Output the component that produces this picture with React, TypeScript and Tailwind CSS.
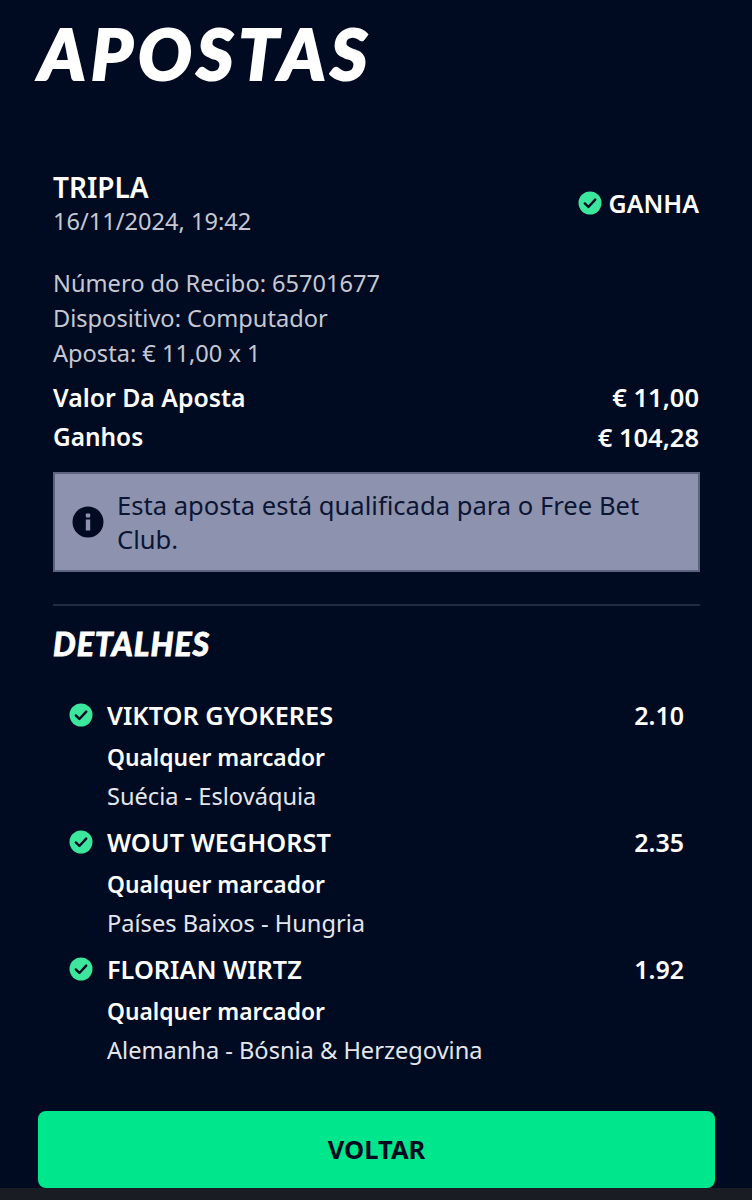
import React from 'react';

const bets = [
  { name: 'VIKTOR GYOKERES', odd: '2.10', match: 'Suécia - Eslováquia' },
  { name: 'WOUT WEGHORST', odd: '2.35', match: 'Países Baixos - Hungria' },
  { name: 'FLORIAN WIRTZ', odd: '1.92', match: 'Alemanha - Bósnia & Herzegovina' },
];

const CheckIcon = () => (
  <svg width="24" height="24" viewBox="0 0 24 24" className="shrink-0">
    <circle cx="12" cy="12" r="11.5" fill="#3ce69c" />
    <path d="M6.8 12.4l3.6 3.6 6.8-7.4" fill="none" stroke="#000b22" strokeWidth="2.4" strokeLinecap="round" strokeLinejoin="round" />
  </svg>
);

const InfoIcon = () => (
  <svg width="32" height="32" viewBox="0 0 32 32" className="shrink-0">
    <circle cx="16" cy="16" r="15.5" fill="#000b22" />
    <rect x="13.8" y="13.5" width="4.4" height="11" fill="#8d93ae" />
    <rect x="13.8" y="7.5" width="4.4" height="4" rx="1" fill="#8d93ae" />
  </svg>
);

const App: React.FC = () => {
  return (
    <div className="flex flex-col h-[1200px] w-[752px] overflow-hidden bg-[#000b22] text-white font-['Noto_Sans',sans-serif]">
      <h1 className="ml-[39px] mt-[8px] h-[90px] font-['Lato',sans-serif] font-black italic text-[71px] leading-[90px] tracking-[5.2px] [-webkit-text-stroke:2px_white]">
        APOSTAS
      </h1>

      <div className="flex-1 pl-[53px] pr-[52px] pt-[71px]">
        <div className="flex items-center justify-between pr-[1px]">
          <div>
            <div className="text-[28px] leading-[36px] font-semibold">TRIPLA</div>
            <div className="text-[23.6px] leading-[32px] text-[#c5c8d3]">16/11/2024, 19:42</div>
          </div>
          <div className="flex items-center gap-[7px]">
            <CheckIcon />
            <span className="text-[25px] font-semibold leading-[32px]">GANHA</span>
          </div>
        </div>

        <div className="mt-[30px] flex flex-col gap-[3px] text-[23.6px] leading-[32px] text-[#c5c8d3]">
          <div>Número do Recibo: 65701677</div>
          <div>Dispositivo: Computador</div>
          <div>Aposta: € 11,00 x 1</div>
        </div>

        <div className="mt-[12px] flex justify-between pr-[1px] text-[24.8px] leading-[32px] font-semibold">
          <span>Valor Da Aposta</span>
          <span className="text-[25.5px]">€ 11,00</span>
        </div>
        <div className="mt-[8px] flex justify-between pr-[1px] text-[24.8px] leading-[32px] font-semibold">
          <span className="text-[24.4px]">Ganhos</span>
          <span className="text-[25.5px]">€ 104,28</span>
        </div>

        <div className="mt-[19px] flex items-center gap-[13px] h-[100px] bg-[#8d93ae] border-2 border-[#5d6480] pl-[17px] pr-[16px] text-[25.6px] leading-[34px] text-[#0c1534]">
          <InfoIcon />
          <span className="pt-[2px]">Esta aposta está qualificada para o Free Bet Club.</span>
        </div>

        <div className="mt-[32px] border-t-2 border-[#232a3d]" />

        <h2 className="mt-[18px] font-['Lato',sans-serif] font-black italic text-[32px] leading-[40px] tracking-[1px] [-webkit-text-stroke:0.8px_white]">DETALHES</h2>

        <div className="mt-[34px] flex flex-col gap-[13px] pl-[16px] pr-[16px]">
          {bets.map(bet => (
            <div key={bet.name}>
              <div className="flex items-center">
                <CheckIcon />
                <span className="ml-[14px] flex-1 text-[25.3px] leading-[34px] font-semibold">{bet.name}</span>
                <span className="text-[25px] leading-[34px] font-semibold">{bet.odd}</span>
              </div>
              <div className="mt-[10px] pl-[38px] text-[22.8px] leading-[32px] font-semibold">Qualquer marcador</div>
              <div className="mt-[6px] pl-[38px] text-[23.6px] leading-[32px] text-[#e4e6ec]">{bet.match}</div>
            </div>
          ))}
        </div>
      </div>

      <button className="ml-[38px] mr-[37px] h-[77px] rounded-[8px] bg-[#00e68c] text-[#000b22] text-[25.5px] font-bold">
        VOLTAR
      </button>
      <div className="h-[12px] shrink-0 bg-[#1a1c24]" />
    </div>
  );
};

export default App;
